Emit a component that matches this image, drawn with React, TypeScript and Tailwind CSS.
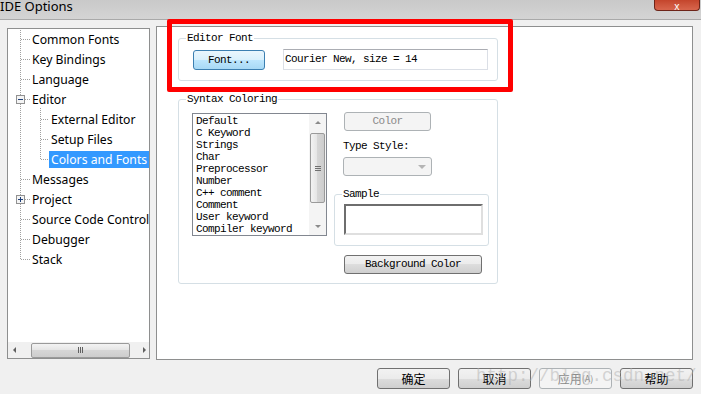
const btn =
  "flex items-center justify-center rounded-[3px] border border-[#707070] bg-[linear-gradient(#f2f2f2,#ebebeb_50%,#dddddd_50%,#cfcfcf)]";
const btnOff =
  "flex items-center justify-center rounded-[3px] border border-[#adb2b5] bg-[#f4f4f4] text-[#8a8a8a]";
const mono = "font-['Liberation_Mono',monospace] text-[11px] tracking-[-0.6px]";

const tree = [
  { label: "Common Fonts", lvl: 1 },
  { label: "Key Bindings", lvl: 1 },
  { label: "Language", lvl: 1 },
  { label: "Editor", lvl: 1 },
  { label: "External Editor", lvl: 2 },
  { label: "Setup Files", lvl: 2 },
  { label: "Colors and Fonts", lvl: 2, sel: true },
  { label: "Messages", lvl: 1 },
  { label: "Project", lvl: 1 },
  { label: "Source Code Control", lvl: 1 },
  { label: "Debugger", lvl: 1 },
  { label: "Stack", lvl: 1 },
];

const syntax = [
  "Default",
  "C Keyword",
  "Strings",
  "Char",
  "Preprocessor",
  "Number",
  "C++ comment",
  "Comment",
  "User keyword",
  "Compiler keyword",
];

function TreeLines() {
  const l1 = [39, 59, 79, 179, 219, 239, 259];
  const l2 = [119, 139, 159];
  return (
    <svg className="pointer-events-none absolute left-0 top-0" width="141" height="329" viewBox="8 29 141 329">
      <g stroke="#a0a0a0" strokeDasharray="1 1" fill="none">
        <line x1="20.5" y1="30" x2="20.5" y2="259" />
        <line x1="40.5" y1="108" x2="40.5" y2="159" />
        {l1.map((y) => (
          <line key={y} x1="21" y1={y + 0.5} x2="30" y2={y + 0.5} />
        ))}
        <line x1="25" y1="99.5" x2="30" y2="99.5" />
        <line x1="25" y1="199.5" x2="30" y2="199.5" />
        {l2.map((y) => (
          <line key={y} x1="41" y1={y + 0.5} x2="49" y2={y + 0.5} />
        ))}
      </g>
      {[99, 199].map((y) => (
        <g key={y}>
          <rect x="16.5" y={y - 3.5} width="8" height="8" fill="#f4f4f4" stroke="#919191" />
          <line x1="18" y1={y + 0.5} x2="23" y2={y + 0.5} stroke="#1e3f7a" />
          {y === 199 && <line x1="20.5" y1={y - 2} x2="20.5" y2={y + 3} stroke="#1e3f7a" />}
        </g>
      ))}
    </svg>
  );
}

function Group({ label, className, children }: { label: string; className: string; children?: React.ReactNode }) {
  return (
    <div className={"relative rounded-[3px] border border-[#d5dfe5] " + className}>
      <span className={"absolute -top-[8px] left-[7px] bg-white px-[1px] leading-[14px] " + mono}>{label}</span>
      {children}
    </div>
  );
}

export default function App() {
  return (
    <div className="relative flex h-[394px] w-[701px] flex-col overflow-hidden bg-[#f0f0f0] font-['Noto_Sans',sans-serif] text-black">
      {/* title bar */}
      <div className="flex h-[20px] shrink-0 items-start border-b border-[#a9a9a9] bg-gradient-to-b from-[#c9c9c9] to-[#d4d4d4]">
        <span className="-mt-[3px] text-[13px] leading-[18px]">IDE Options</span>
        <div className="ml-auto mr-[1px] flex h-[11px] w-[46px] items-end justify-center rounded-b-[4px] border border-t-0 border-[#6d2418] bg-gradient-to-b from-[#c4452c] to-[#d8664d] text-[10px] leading-[8px] text-white">
          x
        </div>
      </div>

      <div className="flex items-start">
        {/* tree */}
        <div className="relative ml-[7px] mt-[8px] flex h-[331px] w-[143px] flex-col overflow-hidden border border-[#8e8f8f] bg-white">
          <TreeLines />
          <div className="flex-1 overflow-hidden text-[12.2px]">
            {tree.map((r) => (
              <div key={r.label} className={"flex h-[20px] items-center whitespace-nowrap " + (r.lvl === 1 ? "pl-[22px]" : "pl-[41px]")}>
                <span className={"px-[2px] leading-[17px] " + (r.sel ? "bg-[#3399ff] text-white" : "")}>{r.label}</span>
              </div>
            ))}
          </div>
          <div className="flex h-[16px] shrink-0 items-center bg-[#f0f0f0]">
            <span className="ml-[5px] h-0 w-0 border-y-[3px] border-r-[3px] border-y-transparent border-r-[#606060]" />
            <div className="ml-[15px] flex h-[15px] w-[99px] items-center justify-center rounded-[2px] border border-[#9a9a9a] bg-[linear-gradient(#f3f3f3,#e4e4e4_50%,#d6d6d6_50%,#cdcdcd)]">
              <div className="flex gap-[1px]">
                <span className="h-[6px] w-[1px] bg-[#606060]" />
                <span className="h-[6px] w-[1px] bg-[#606060]" />
                <span className="h-[6px] w-[1px] bg-[#606060]" />
              </div>
            </div>
            <span className="ml-[13px] h-0 w-0 border-y-[3px] border-l-[3px] border-y-transparent border-l-[#606060]" />
          </div>
        </div>

        {/* right page */}
        <div className="ml-[6px] mt-[6px] h-[334px] w-[537px] border border-[#8e8f8f] bg-white">
          <Group label="Editor Font" className="ml-[21px] mt-[11px] flex h-[43px] w-[320px] items-start pl-[14px] pt-[11px]">
            <div className="flex h-[20px] w-[72px] items-center justify-center rounded-[3px] border border-[#3c7fb1] bg-[linear-gradient(#eaf6fd,#d9f0fc_50%,#bee6fd_50%,#a7d9f5)]">
              <span className={mono}>Font...</span>
            </div>
            <div className="-mt-[1px] ml-[18px] flex h-[21px] w-[205px] items-center border border-[#dbdfe6] border-t-[#abadb3] pl-[1px]">
              <span className={mono}>Courier New, size = 14</span>
            </div>
          </Group>

          <Group label="Syntax Coloring" className="ml-[21px] mt-[18px] flex h-[185px] w-[320px] items-start pl-[13px] pt-[13px]">
            <div className="flex h-[123px] w-[135px] border border-[#828790] bg-white">
              <div className="flex-1 overflow-hidden pl-[3px] pt-[1px]">
                {syntax.map((s) => (
                  <div key={s} className={"h-[12px] whitespace-nowrap leading-[12px] " + mono}>
                    {s}
                  </div>
                ))}
              </div>
              <div className="flex w-[17px] flex-col items-center bg-[#f4f4f4]">
                <span className="mt-[7px] h-0 w-0 border-x-[3px] border-b-[3px] border-x-transparent border-b-[#8a8a8a]" />
                <div className="mt-[9px] flex h-[70px] w-[15px] items-center justify-center rounded-[2px] border border-[#9a9a9a] bg-[linear-gradient(90deg,#f3f3f3,#e4e4e4_50%,#d6d6d6_50%,#cdcdcd)]">
                  <div className="flex flex-col gap-[1px]">
                    <span className="h-[1px] w-[6px] bg-[#707070]" />
                    <span className="h-[1px] w-[6px] bg-[#707070]" />
                    <span className="h-[1px] w-[6px] bg-[#707070]" />
                  </div>
                </div>
                <span className="mt-[22px] h-0 w-0 border-x-[3px] border-t-[3px] border-x-transparent border-t-[#8a8a8a]" />
              </div>
            </div>

            <div className="-mt-[1px] ml-[7px] flex w-[155px] flex-col items-start">
              <div className={"ml-[10px] h-[19px] w-[87px] " + btnOff}>
                <span className={mono}>Color</span>
              </div>
              <span className={"ml-[9px] mt-[9px] leading-[12px] " + mono}>Type Style:</span>
              <div className="ml-[9px] mt-[5px] flex h-[19px] w-[89px] items-center justify-end rounded-[3px] border border-[#adb2b5] bg-[#f4f4f4] pr-[5px]">
                <span className="h-0 w-0 border-x-[4px] border-t-[4px] border-x-transparent border-t-[#b4b4b4]" />
              </div>
              <Group label="Sample" className="mt-[18px] h-[52px] w-[155px] pl-[9px] pt-[9px]">
                <div className="h-[31px] w-[139px] border-2 border-[#dfdfdf] border-l-[#6e6e6e] border-t-[#6e6e6e] bg-white" />
              </Group>
              <div className={"ml-[10px] mt-[9px] h-[19px] w-[138px] " + btn}>
                <span className={mono}>Background Color</span>
              </div>
            </div>
          </Group>
        </div>
      </div>

      {/* dialog buttons */}
      <div className="mt-[8px] flex justify-end gap-[8px] pr-[8px] font-['Noto_Sans_CJK_SC',sans-serif] text-[12px]">
        <div className={"h-[21px] w-[73px] " + btn}>确定</div>
        <div className={"h-[21px] w-[73px] " + btn}>取消</div>
        <div className={"h-[21px] w-[73px] " + btnOff}>
          应用<span className="text-[9px]">(A)</span>
        </div>
        <div className={"h-[21px] w-[73px] " + btn}>帮助</div>
      </div>

      {/* watermark */}
      <span className="pointer-events-none absolute left-[476px] top-[363px] font-['Liberation_Mono',monospace] text-[17.5px] text-[#b0b0b0]/50">
        http://blog.csdn.net/
      </span>

      {/* red annotation */}
      <div className="pointer-events-none absolute left-[167px] top-[19px] h-[73px] w-[346px] rounded-[2px] border-[5px] border-[#ff0000]" />
    </div>
  );
}
